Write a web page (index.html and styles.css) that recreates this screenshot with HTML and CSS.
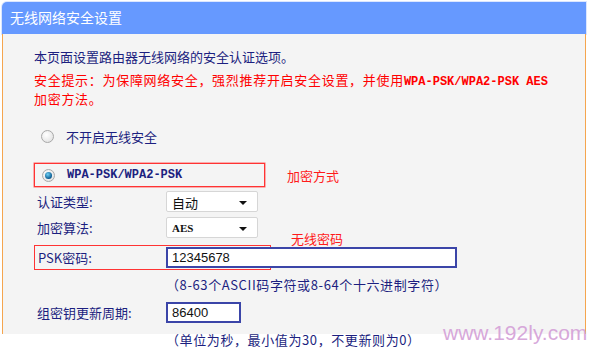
FILE: index.html
```html
<!DOCTYPE html>
<html lang="zh-CN">
<head>
    <meta charset="UTF-8">
    <meta name="viewport" content="width=device-width, initial-scale=1.0">
    <title>无线网络安全设置</title>
    <link rel="stylesheet" href="styles.css">
</head>
<body>

<div class="panel">
    <div class="panel-title">无线网络安全设置</div>

    <div class="panel-body">
        <p class="intro">本页面设置路由器无线网络的安全认证选项。</p>
        <p class="warn">安全提示：为保障网络安全，强烈推荐开启安全设置，并使用<span class="mono">WPA-PSK/WPA2-PSK AES</span><br>加密方法。</p>

        <div class="radio-row">
            <span class="radio"></span>
            <span>不开启无线安全</span>
        </div>

        <div class="radio-row mark-box">
            <span class="radio checked"></span>
            <span class="mono">WPA-PSK/WPA2-PSK</span>
        </div>

        <div class="field-row first-field">
            <span class="field-label">认证类型:</span>
            <div class="select">自动<span class="arrow"></span></div>
        </div>
        <div class="field-row">
            <span class="field-label">加密算法:</span>
            <div class="select mono-sel">AES<span class="arrow"></span></div>
        </div>

        <div class="field-row psk-box">
            <span class="field-label">PSK密码:</span>
            <div class="text-input wide">12345678</div>
        </div>
        <div class="hint">（8-63个ASCII码字符或8-64个十六进制字符）</div>

        <div class="field-row group-row">
            <span class="field-label">组密钥更新周期:</span>
            <div class="text-input short">86400</div>
        </div>
        <div class="hint">（单位为秒，最小值为30，不更新则为0）</div>

        <!-- annotations drawn over the screenshot -->
        <span class="note note-method">加密方式</span>
        <span class="note note-pwd">无线密码</span>
    </div>
</div>

<div class="watermark">www.192ly.com</div>

</body>
</html>
```

FILE: styles.css
```css
body {
    margin: 0;
    padding: 0;
    background: #fff;
    font-family: "Noto Sans CJK SC", "Liberation Sans", sans-serif;
    font-size: 13px;
    color: #1c1f80;
    text-spacing-trim: space-all;
    position: relative;
    height: 348px;
    overflow: hidden;
}
.panel {
    margin: 2px 0 0 2px;
    width: 584px;
}
.panel-title {
    height: 32px;
    line-height: 31px;
    background-color: #6699ff;
    color: #fff;
    font-size: 14px;
    padding-left: 8px;
    border-top-left-radius: 5px;
    box-shadow: 0 0 0 1px #dbe6ff;
}
.panel-body {
    position: relative;
    background-color: #f4f4f4;
    border-left: 1px solid #f5a54e;
    border-right: 1px solid #f5a54e;
    padding: 13px 0 10px 31px;
    height: 300px;
    box-sizing: border-box;
}
.intro {
    margin: 0 0 3px;
    line-height: 20px;
}
.warn {
    margin: 0;
    color: #ff0000;
    line-height: 19px;
    letter-spacing: 0.7px;
}
.mono {
    font-family: "Liberation Mono", "DejaVu Sans Mono", monospace;
    font-weight: bold;
    font-size: 12px;
    line-height: 1;
    letter-spacing: 0;
}
.radio-row {
    display: flex;
    align-items: center;
    height: 24px;
    margin-top: 16px;
    padding-left: 7px;
}
.radio {
    width: 11px;
    height: 11px;
    border-radius: 50%;
    border: 1px solid #a8a8a8;
    background: radial-gradient(circle at 40% 35%, #ffffff, #dcdcdc);
    margin-right: 12px;
    position: relative;
    flex-shrink: 0;
}
.radio.checked::after {
    content: "";
    position: absolute;
    left: 2px;
    top: 2px;
    width: 7px;
    height: 7px;
    border-radius: 50%;
    background: radial-gradient(circle at 40% 35%, #6fd0f5, #0a5a90 70%, #05304f);
}
.mark-box {
    margin-top: 15px;
    width: 222px;
    height: 22px;
    border: 1px solid #ff3333;
    box-shadow: 0 0 0 0.5px #ff6666;
}
.mark-box .mono {
    color: #1c1f80;
}
.field-row {
    display: flex;
    align-items: center;
    height: 26px;
}
.first-field {
    margin-top: 1px;
}
.field-label {
    width: 132px;
    padding-left: 3px;
    box-sizing: border-box;
    flex-shrink: 0;
}
.select {
    position: relative;
    width: 92px;
    height: 21px;
    line-height: 21px;
    background: #fff;
    border: 1px solid #d6d6d6;
    border-radius: 2px;
    box-sizing: border-box;
    padding-left: 5px;
    color: #111;
}
.mono-sel {
    font-family: "Liberation Serif", serif;
    font-weight: bold;
    font-size: 11px;
}
.arrow {
    position: absolute;
    right: 10px;
    top: 9px;
    border-left: 4px solid transparent;
    border-right: 4px solid transparent;
    border-top: 4px solid #111;
}
.psk-box {
    margin-top: 5px;
    width: 237px;
    height: 25px;
    border: 1px solid #ff3333;
    box-sizing: border-box;
}
.psk-box .field-label {
    width: 131px;
}
.text-input {
    height: 21px;
    line-height: 18px;
    background: #fff;
    border: 2px solid #3b45a8;
    box-sizing: border-box;
    padding-left: 4px;
    color: #111;
    font-family: "Liberation Sans", sans-serif;
    font-size: 13px;
    flex-shrink: 0;
}
.wide {
    width: 291px;
}
.short {
    width: 75px;
}
.hint {
    padding-left: 132px;
    line-height: 18px;
    margin-top: 6px;
    letter-spacing: 0.6px;
}
.group-row {
    margin-top: 5px;
}
.note {
    position: absolute;
    color: #ff1a1a;
    font-size: 13px;
}
.note-method {
    left: 284px;
    top: 132px;
}
.note-pwd {
    left: 288px;
    top: 195px;
}
.watermark {
    position: absolute;
    left: 443px;
    top: 321px;
    font-family: "Liberation Sans", sans-serif;
    font-size: 21px;
    color: #d7a8da;
}
```
